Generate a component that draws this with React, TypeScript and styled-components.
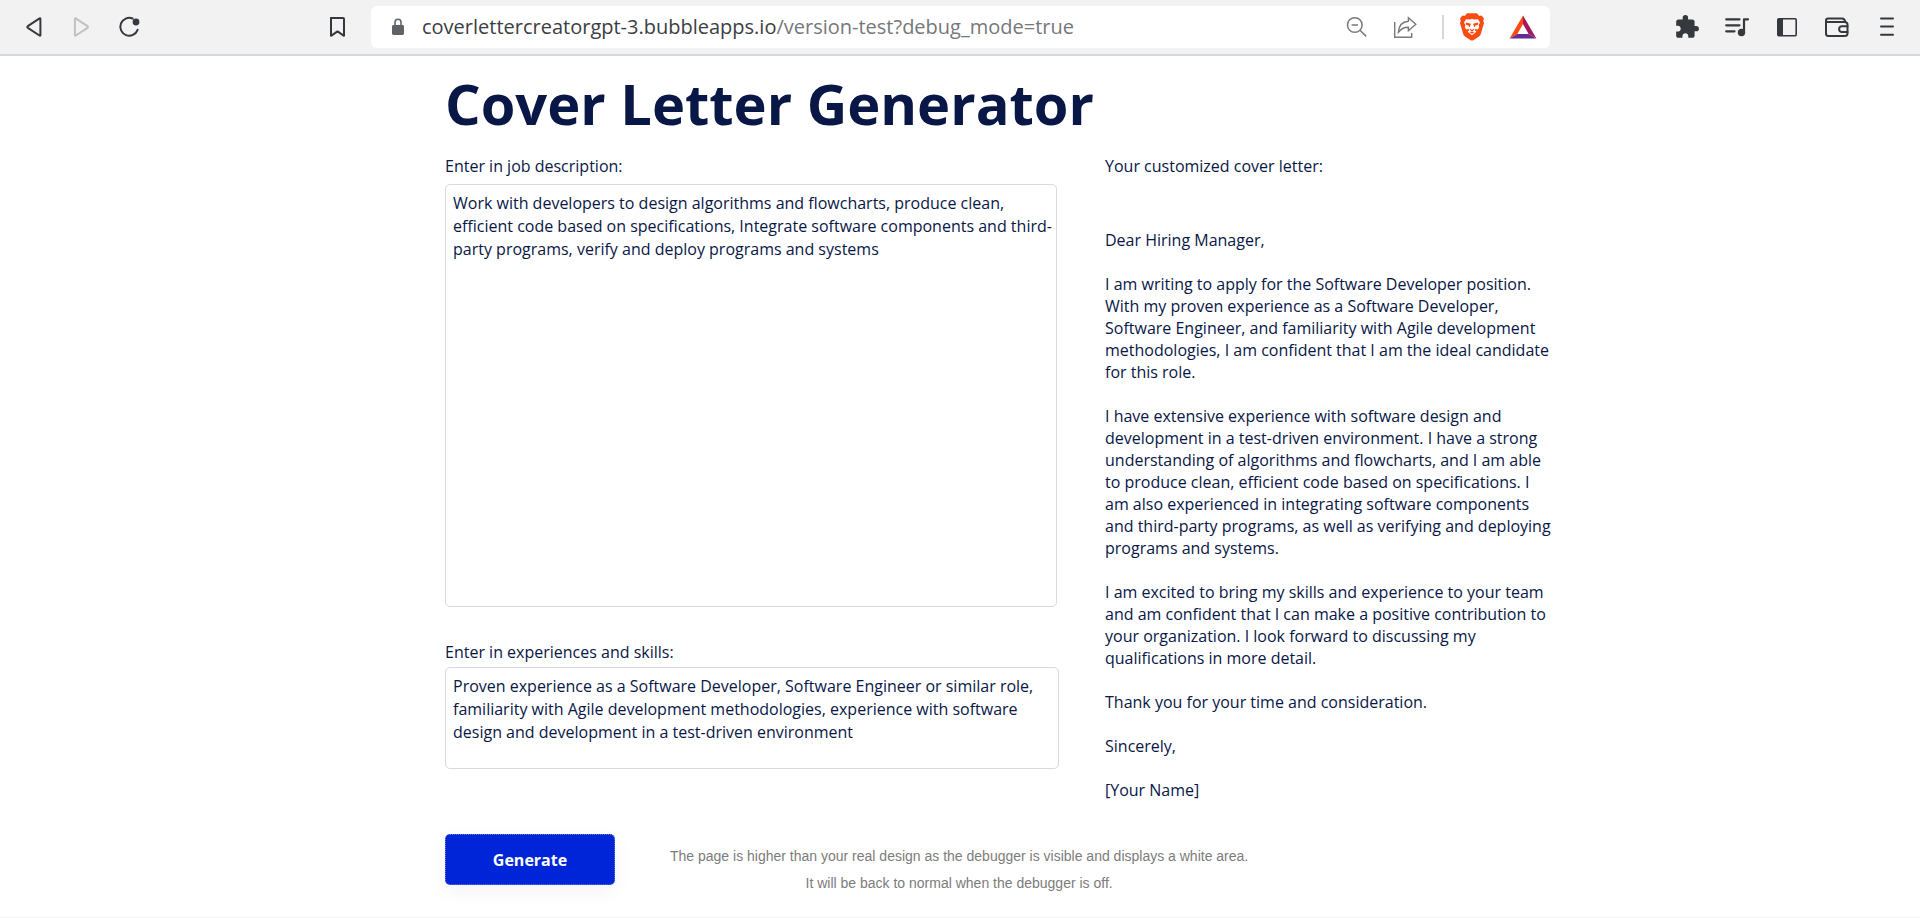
import React, { useState } from "react";
import styled, { createGlobalStyle } from "styled-components";

const GlobalStyle = createGlobalStyle`
  *, *::before, *::after { box-sizing: border-box; }
  body { margin: 0; background: #fff; }
`;

const sans = `"Open Sans", "Noto Sans", sans-serif`;

const Page = styled.div`
  min-height: 100vh;
  display: flex;
  flex-direction: column;
  font-family: ${sans};
  font-size: 16px;
  line-height: 22px;
  color: #091747;
`;

const Toolbar = styled.header`
  display: flex;
  align-items: center;
  height: 56px;
  padding: 0 9px 0 10px;
  background: #f2f2f2;
  border-bottom: 2px solid #d3d8dd;
`;

const NavButtons = styled.nav`
  display: flex;
  width: 303px;
`;

const ToolButtons = styled.div`
  display: flex;
  gap: 2px;
  margin-left: 113px;
`;

const IconButton = styled.button<{ $color?: string }>`
  display: grid;
  place-items: center;
  flex: none;
  width: 48px;
  height: 42px;
  padding: 0;
  border: 0;
  background: none;
  color: ${(p) => p.$color ?? "#35393d"};
  cursor: pointer;

  svg {
    display: block;
  }
`;

const AddressBar = styled.div`
  flex: 1;
  min-width: 0;
  display: flex;
  align-items: center;
  height: 42px;
  margin-left: 10px;
  padding: 0 3px 0 20px;
  border-radius: 6px;
  background: #fff;
`;

const Address = styled.div`
  flex: 1;
  min-width: 0;
  margin-left: 17px;
  overflow: hidden;
  white-space: nowrap;
  font-size: 20px;
  line-height: 28px;
  color: #3b3e42;
  outline: none;
`;

const AddressPath = styled.span`
  color: #75787b;
`;

const Divider = styled.span`
  width: 2px;
  height: 24px;
  margin: 0 4px 0 13px;
  background: #d8d8d8;
`;

const Badges = styled.div`
  display: flex;
  gap: 3px;
`;

const Main = styled.main`
  display: grid;
  grid-template-columns: minmax(24px, 445fr) minmax(0, 1110px) minmax(24px, 365fr);
  flex: 1;
`;

const Content = styled.div`
  grid-column: 2;
  padding-top: 8px;
`;

const Title = styled.h1`
  margin: 0;
  font-size: 56px;
  line-height: 78px;
  font-weight: 700;
`;

const Columns = styled.div`
  display: grid;
  grid-template-columns: minmax(0, 614fr) minmax(0, 450fr);
  column-gap: 46px;
  padding-top: 13px;
`;

const FormColumn = styled.form`
  display: flex;
  flex-direction: column;
`;

const FieldLabel = styled.label`
  display: block;
`;

const TextBox = styled.textarea<{ $height: number; $gapAbove: number; $gapBelow: number; $inset?: number }>`
  display: block;
  height: ${(p) => p.$height}px;
  margin: ${(p) => `${p.$gapAbove}px ${p.$inset ?? 0}px ${p.$gapBelow}px 0`};
  padding: 7px 0 7px 7px;
  border: 1px solid #d6dae4;
  border-radius: 5px;
  background: #fff;
  color: inherit;
  font-family: inherit;
  font-size: 16px;
  line-height: 23px;
  resize: none;
  outline: none;
`;

const ActionRow = styled.div`
  display: flex;
  align-items: flex-start;
  gap: 55px;
`;

const GenerateButton = styled.button`
  flex: none;
  width: 170px;
  height: 51px;
  border: 1px dotted #6b7ae0;
  border-radius: 5px;
  background: #0025d9;
  color: #fff;
  font-family: inherit;
  font-size: 16px;
  font-weight: 700;
  box-shadow: 0 6px 20px rgba(9, 23, 71, 0.05);
  cursor: pointer;
`;

const DebugNote = styled.p`
  flex: none;
  margin: 0;
  padding-top: 9px;
  font-family: "Liberation Sans", Arial, sans-serif;
  font-size: 14px;
  line-height: 27px;
  text-align: center;
  color: #7c7c7c;
`;

const Letter = styled.article`
  h2 {
    margin: 0 0 52px;
    font-size: 16px;
    font-weight: 400;
    line-height: 22px;
  }

  p {
    margin: 0 0 22px;
  }
`;

const PageEnd = styled.footer`
  height: 1px;
  background: #f4f4f4;
`;

const letterParagraphs = [
  "Dear Hiring Manager,",
  "I am writing to apply for the Software Developer position. With my proven experience as a Software Developer, Software Engineer, and familiarity with Agile development methodologies, I am confident that I am the ideal candidate for this role.",
  "I have extensive experience with software design and development in a test-driven environment. I have a strong understanding of algorithms and flowcharts, and I am able to produce clean, efficient code based on specifications. I am also experienced in integrating software components and third-party programs, as well as verifying and deploying programs and systems.",
  "I am excited to bring my skills and experience to your team and am confident that I can make a positive contribution to your organization. I look forward to discussing my qualifications in more detail.",
  "Thank you for your time and consideration.",
  "Sincerely,",
  "[Your Name]",
];

const stroke = { fill: "none", stroke: "currentColor", strokeLinecap: "round", strokeLinejoin: "round" } as const;

const BackIcon = () => (
  <svg width="24" height="24" viewBox="0 0 24 24" {...stroke} strokeWidth="2">
    <path d="M17.6 3.4Q18.4 2.9 18.4 4V20Q18.4 21.1 17.5 20.5L5.8 12.8Q4.8 12 5.8 11.2Z" />
  </svg>
);

const ForwardIcon = () => (
  <svg width="24" height="24" viewBox="0 0 24 24" {...stroke} strokeWidth="2">
    <path d="M5.7 3.4Q4.9 2.9 4.9 4V20Q4.9 21.1 5.8 20.5L17.5 12.8Q18.5 12 17.5 11.2Z" />
  </svg>
);

const ReloadIcon = () => (
  <svg width="24" height="24" viewBox="0 0 24 24" {...stroke} strokeWidth="2">
    <path d="M14.6 3.5A8.9 8.9 0 1 0 19.6 14.8" />
    <circle cx="18" cy="7" r="3.4" fill="currentColor" stroke="none" />
  </svg>
);

const BookmarkIcon = () => (
  <svg width="24" height="24" viewBox="0 0 24 24" {...stroke} strokeWidth="2">
    <path d="M5.8 3H18.2Q19 3 19 3.8V20.8L12.5 16.4L6 20.8V3Z" />
  </svg>
);

const LockIcon = () => (
  <svg width="14" height="20" viewBox="0 0 14 20">
    <path d="M4 9V5.2a3 3 0 0 1 6 0V9" fill="none" stroke="#5f6368" strokeWidth="1.6" />
    <rect x="1" y="8" width="12" height="10" rx="1.4" fill="#5f6368" />
  </svg>
);

const ZoomOutIcon = () => (
  <svg width="24" height="24" viewBox="0 0 24 24" {...stroke} strokeWidth="1.5" strokeLinecap="butt">
    <circle cx="9.8" cy="10" r="7.3" />
    <path d="M6.6 10H13M15 15.2L21.2 21.4" />
  </svg>
);

const ShareIcon = () => (
  <svg width="24" height="24" viewBox="0 0 24 24" {...stroke} strokeWidth="1.4" strokeLinecap="butt" strokeLinejoin="miter">
    <path d="M1.7 7V22.3H18.7V18" />
    <path d="M15.4 2.7L22.8 9.2L15.4 15.8V12.2C10.6 12 8.1 13.7 5.4 17.3C5.7 11 9.2 6.7 15.4 6.2Z" />
  </svg>
);

const BraveIcon = () => (
  <svg width="26" height="30" viewBox="0 0 26 30">
    <path
      d="M8.2 1.2H17.8L20.4 4L22.5 3.6L25 6.4L24.2 8.8L25 11L21.7 22.2Q21.2 23.6 20 24.5L14.4 28.2Q13 29 11.6 28.2L6 24.5Q4.8 23.6 4.3 22.2L1 11L1.8 8.8L1 6.4L3.5 3.6L5.6 4Z"
      fill="#fb4b12"
    />
    <path
      d="M7 7.3L10 7.6Q13 6.4 16 7.6L19 7.3L21 10.4L19.6 13L20.2 15.4L18.6 17.6L16.4 16.9L15.4 17.8L17.4 19.8L13 23.2L8.6 19.8L10.6 17.8L9.6 16.9L7.4 17.6L5.8 15.4L6.4 13L5 10.4Z"
      fill="#fff"
    />
    <path
      d="M6.8 10.4L11.2 11.4L11.8 12.2L10.6 15.6L9.4 13.4L7 12.8ZM19.2 10.4L14.8 11.4L14.2 12.2L15.4 15.6L16.6 13.4L19 12.8ZM10.8 16.6L13 18L15.2 16.6L14.6 18.6L13 19.4L11.4 18.6ZM10.6 20.4L13 19.6L15.4 20.4L13 21.8Z"
      fill="#fb4b12"
    />
  </svg>
);

const RewardsIcon = () => (
  <svg width="28" height="24" viewBox="0 0 28 24">
    <path d="M14 0.5L0.6 23.5L8.4 19L14 9Z" fill="#ff4a12" />
    <path d="M14 0.5L27.4 23.5L19.6 19L14 9Z" fill="#a3195b" />
    <path d="M0.6 23.5H27.4L19.6 19H8.4Z" fill="#662d91" />
  </svg>
);

const ExtensionsIcon = () => (
  <svg width="26" height="26" viewBox="0 0 24 24" fill="currentColor">
    <path d="M20.5 11H19V7c0-1.1-.9-2-2-2h-4V3.5a2.5 2.5 0 0 0-5 0V5H4c-1.1 0-1.99.9-1.99 2v3.8H3.5c1.49 0 2.7 1.21 2.7 2.7s-1.21 2.7-2.7 2.7H2V20c0 1.1.9 2 2 2h3.8v-1.5c0-1.49 1.21-2.7 2.7-2.7s2.7 1.21 2.7 2.7V22H17c1.1 0 2-.9 2-2v-4h1.5a2.5 2.5 0 0 0 0-5z" />
  </svg>
);

const PlaylistIcon = () => (
  <svg width="24" height="24" viewBox="0 0 24 24" {...stroke} strokeWidth="2.2">
    <path d="M1.2 4.3H14.5M1.2 10.3H14.5M1.2 16.3H9.5M19 17V4.3H23" />
    <circle cx="16.5" cy="17.5" r="3.7" fill="currentColor" stroke="none" />
  </svg>
);

const SidebarIcon = () => (
  <svg width="24" height="24" viewBox="0 0 24 24">
    <rect x="2.8" y="3.8" width="18.4" height="16.9" rx="1" fill="none" stroke="currentColor" strokeWidth="1.6" />
    <path d="M3 4H8V20.5H3Z" fill="currentColor" />
  </svg>
);

const WalletIcon = () => (
  <svg width="26" height="24" viewBox="0 0 26 24" {...stroke} strokeWidth="2">
    <path d="M2 5.5V18.5Q2 21 4.5 21H20.5Q23.5 21 23.5 18.5V9.5Q23.5 7 20.5 7H3.5Q2 7 2 5.5Q2 3.5 4 3.5H18Q20.5 3.5 21.5 7" />
    <path d="M23.5 11.3H17.5A2.9 2.9 0 0 0 17.5 17H23.5" />
  </svg>
);

const MenuIcon = () => (
  <svg width="24" height="24" viewBox="0 0 24 24" {...stroke} strokeWidth="2">
    <path d="M6 3.5H18M6 11.5H18M6 19.7H18" />
  </svg>
);

const tools = [
  { label: "Extensions", Icon: ExtensionsIcon },
  { label: "Playlist", Icon: PlaylistIcon },
  { label: "Sidebar", Icon: SidebarIcon },
  { label: "Wallet", Icon: WalletIcon },
  { label: "Menu", Icon: MenuIcon },
];

function BrowserToolbar() {
  return (
    <Toolbar>
      <NavButtons aria-label="Browser navigation">
        <IconButton aria-label="Back"><BackIcon /></IconButton>
        <IconButton aria-label="Forward" $color="#bfc1c2"><ForwardIcon /></IconButton>
        <IconButton aria-label="Reload"><ReloadIcon /></IconButton>
      </NavButtons>
      <IconButton aria-label="Bookmark"><BookmarkIcon /></IconButton>
      <AddressBar>
        <LockIcon />
        <Address role="textbox" aria-label="Address" contentEditable suppressContentEditableWarning spellCheck={false}>
          coverlettercreatorgpt-3.bubbleapps.io<AddressPath>/version-test?debug_mode=true</AddressPath>
        </Address>
        <IconButton aria-label="Zoom out" $color="#77797b"><ZoomOutIcon /></IconButton>
        <IconButton aria-label="Share" $color="#77797b"><ShareIcon /></IconButton>
        <Divider />
        <Badges>
          <IconButton aria-label="Shields"><BraveIcon /></IconButton>
          <IconButton aria-label="Rewards"><RewardsIcon /></IconButton>
        </Badges>
      </AddressBar>
      <ToolButtons>
        {tools.map(({ label, Icon }) => (
          <IconButton key={label} aria-label={label}><Icon /></IconButton>
        ))}
      </ToolButtons>
    </Toolbar>
  );
}

export default function App() {
  const [job, setJob] = useState(
    "Work with developers to design algorithms and flowcharts, produce clean, efficient code based on specifications, Integrate software components and third-party programs, verify and deploy programs and systems"
  );
  const [skills, setSkills] = useState(
    "Proven experience as a Software Developer, Software Engineer or similar role, familiarity with Agile development methodologies, experience with software design and development in a test-driven environment"
  );

  return (
    <Page>
      <GlobalStyle />
      <BrowserToolbar />
      <Main>
        <Content>
          <Title>Cover Letter Generator</Title>
          <Columns>
            <FormColumn onSubmit={(e) => e.preventDefault()}>
              <FieldLabel htmlFor="job">Enter in job description:</FieldLabel>
              <TextBox id="job" $height={423} $gapAbove={7} $gapBelow={34} $inset={2} value={job} onChange={(e) => setJob(e.target.value)} />
              <FieldLabel htmlFor="skills">Enter in experiences and skills:</FieldLabel>
              <TextBox id="skills" $height={102} $gapAbove={4} $gapBelow={65} value={skills} onChange={(e) => setSkills(e.target.value)} />
              <ActionRow>
                <GenerateButton type="submit">Generate</GenerateButton>
                <DebugNote>
                  The page is higher than your real design as the debugger is visible and displays a white area.
                  <br />
                  It will be back to normal when the debugger is off.
                </DebugNote>
              </ActionRow>
            </FormColumn>
            <Letter>
              <h2>Your customized cover letter:</h2>
              {letterParagraphs.map((text) => (
                <p key={text}>{text}</p>
              ))}
            </Letter>
          </Columns>
        </Content>
      </Main>
      <PageEnd />
    </Page>
  );
}
